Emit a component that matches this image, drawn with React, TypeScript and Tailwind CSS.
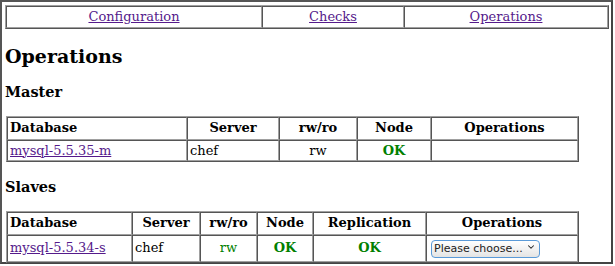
import { ChevronDown } from "lucide-react";

type Col = { label: string; w: string; align?: "left" | "center" };

const serif = "font-['DejaVu_Serif',serif]";

const masterCols: Col[] = [
  { label: "Database", w: "w-[180px]", align: "left" },
  { label: "Server", w: "w-[92px]" },
  { label: "rw/ro", w: "w-[78px]" },
  { label: "Node", w: "w-[74px]" },
  { label: "Operations", w: "w-[147px]" },
];

const slaveCols: Col[] = [
  { label: "Database", w: "w-[125px]", align: "left" },
  { label: "Server", w: "w-[68px]" },
  { label: "rw/ro", w: "w-[57px]" },
  { label: "Node", w: "w-[56px]" },
  { label: "Replication", w: "w-[113px]" },
  { label: "Operations", w: "w-[152px]" },
];

// old-school table border=1 look
const tableCls =
  "border-separate border-spacing-0 border border-t-[#a0a0a0] border-l-[#a0a0a0] border-b-[#555] border-r-[#555]";
const cellCls =
  "border border-t-[#555] border-l-[#555] border-b-[#a0a0a0] border-r-[#a0a0a0] px-[2px]";

function Head({ cols }: { cols: Col[] }) {
  return (
    <thead>
      <tr className="h-[23px]">
        {cols.map((c) => (
          <th
            key={c.label}
            className={`${cellCls} ${c.w} font-bold ${c.align === "left" ? "text-left" : "text-center"}`}
          >
            {c.label}
          </th>
        ))}
      </tr>
    </thead>
  );
}

export default function App() {
  return (
    <div className={`${serif} text-[13px] text-black bg-white w-[615px] h-[266px]`}>
      <div className="w-[613px] h-[264px] border-2 border-t-[#555] border-l-[#555] border-b-[#444] border-r-[#444] px-[3px] pt-[3px]">
        {/* nav */}
        <table className={`${tableCls} w-[604px]`}>
          <tbody>
            <tr className="h-[22px]">
              <td className={`${cellCls} w-[256px] text-center`}>
                <a href="#" className="text-[#551a8b] underline">Configuration</a>
              </td>
              <td className={`${cellCls} w-[142px] text-center`}>
                <a href="#" className="text-[#551a8b] underline">Checks</a>
              </td>
              <td className={`${cellCls} text-center`}>
                <a href="#" className="text-[#551a8b] underline">Operations</a>
              </td>
            </tr>
          </tbody>
        </table>

        <h1 className="text-[19px] font-bold leading-none mt-[18px]">Operations</h1>

        <h3 className="text-[14.5px] font-bold leading-none mt-[19px]">Master</h3>
        <table className={`${tableCls} mt-[16px] ml-px`}>
          <Head cols={masterCols} />
          <tbody>
            <tr className="h-[21px]">
              <td className={cellCls}>
                <a href="#" className="text-[#551a8b] underline">mysql-5.5.35-m</a>
              </td>
              <td className={cellCls}>chef</td>
              <td className={`${cellCls} text-center`}>rw</td>
              <td className={`${cellCls} text-center font-bold text-[#008000]`}>OK</td>
              <td className={cellCls}></td>
            </tr>
          </tbody>
        </table>

        <h3 className="text-[14.5px] font-bold leading-none mt-[18px]">Slaves</h3>
        <table className={`${tableCls} mt-[16px] ml-px`}>
          <Head cols={slaveCols} />
          <tbody>
            <tr className="h-[27px]">
              <td className={cellCls}>
                <a href="#" className="text-[#551a8b] underline">mysql-5.5.34-s</a>
              </td>
              <td className={cellCls}>chef</td>
              <td className={`${cellCls} text-center text-[#008000]`}>rw</td>
              <td className={`${cellCls} text-center font-bold text-[#008000]`}>OK</td>
              <td className={`${cellCls} text-center font-bold text-[#008000]`}>OK</td>
              <td className={`${cellCls} pl-[4px]`}>
                <div className="relative inline-block align-middle">
                  <select className="appearance-none w-[109px] h-[18px] rounded-[4px] border border-[#5a9ad8] bg-gradient-to-b from-white to-[#e4e4e4] pl-[2px] pr-[14px] text-[11px] leading-[16px] font-['DejaVu_Sans',sans-serif] text-[#222] outline-none">
                    <option>Please choose...</option>
                  </select>
                  <ChevronDown className="pointer-events-none absolute right-[4px] top-[4px] w-[10px] h-[10px] text-[#222]" strokeWidth={2.5} />
                </div>
              </td>
            </tr>
          </tbody>
        </table>
      </div>
    </div>
  );
}
